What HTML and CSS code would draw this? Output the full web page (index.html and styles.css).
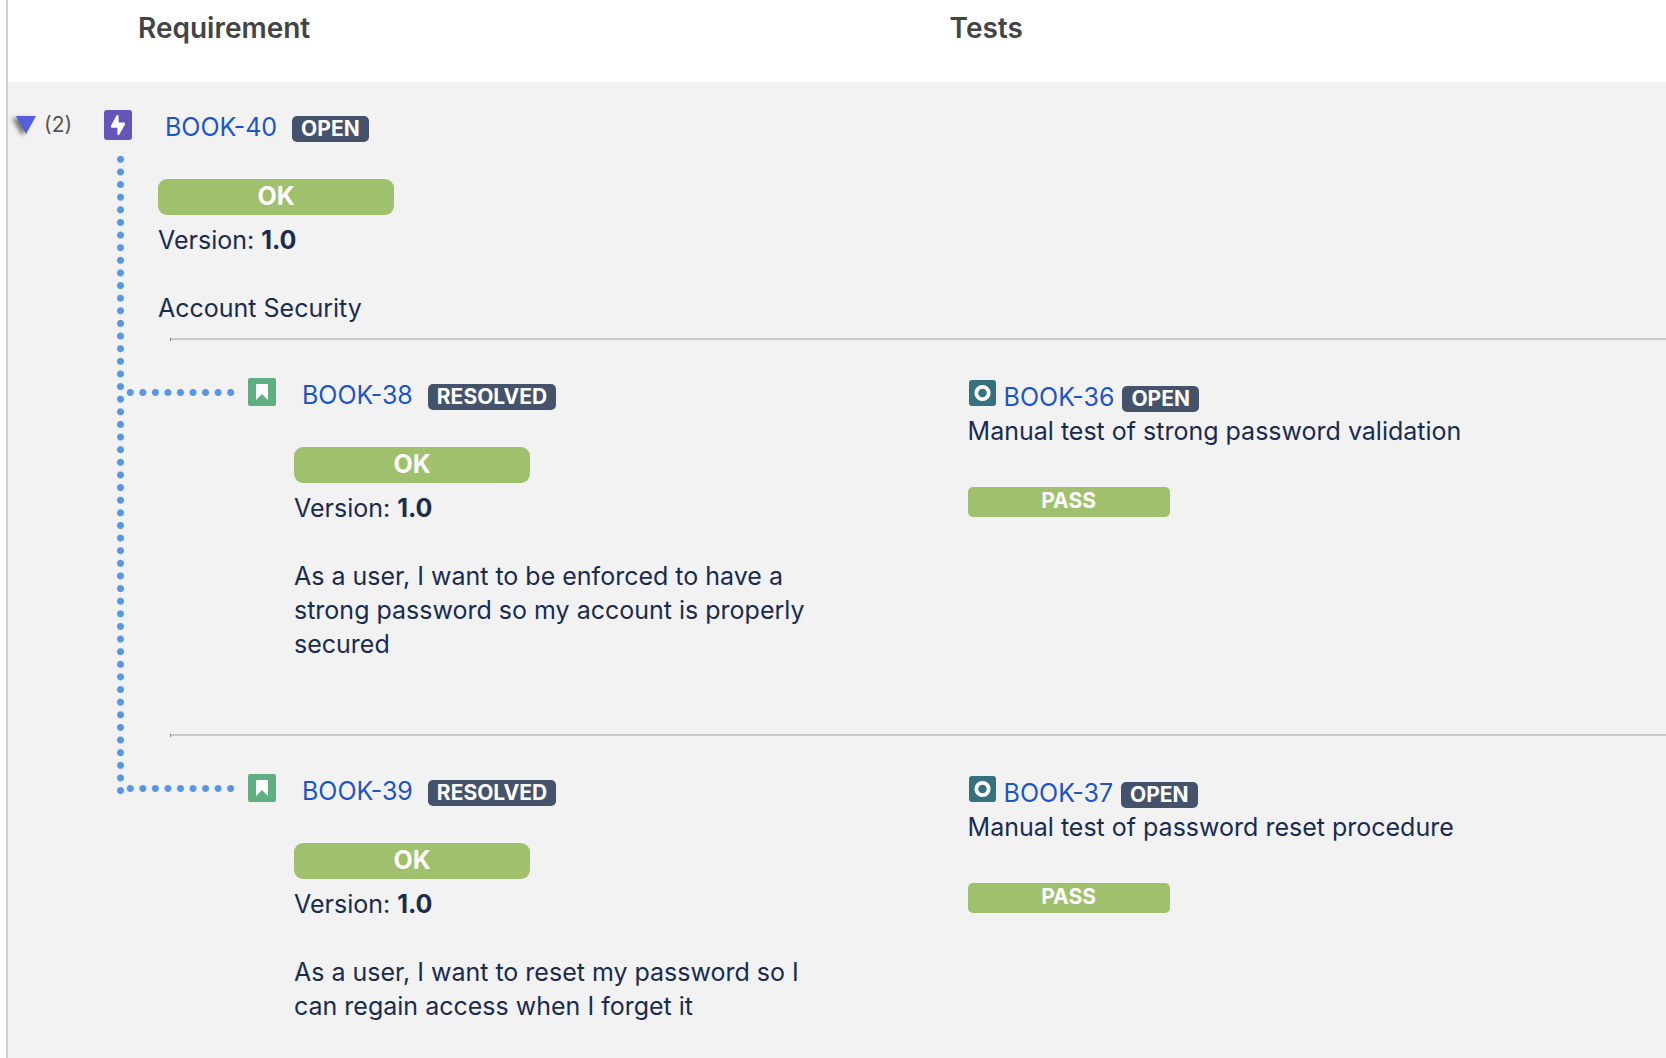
FILE: index.html
```html
<!DOCTYPE html>
<html lang="en">
  <head>
    <title>Traceability report</title>
    <meta charset="UTF-8">
    <meta name="viewport" content="width=device-width, initial-scale=1.0">
    <link rel="stylesheet" href="styles.css">
  </head>
  <body>
    <!--icons used in the rows-->
    <svg class="sprite" aria-hidden="true">
      <symbol id="epic" viewBox="0 0 28 30" preserveAspectRatio="none">
        <rect width="28" height="30" rx="3" fill="#6555b8"/>
        <path d="M12.4 5.6L7 15.8Q6.4 17.6 8 17.8H13.4V24.2Q13.8 26 15.2 24.8L21 14.6Q21.6 12.8 20 12.6H14.6V5.8Q13.8 4.2 12.4 5.6Z" fill="#fff"/>
      </symbol>
      <symbol id="story" viewBox="0 0 28 28">
        <rect width="28" height="28" rx="2" fill="#5faf82"/>
        <path d="M8 7Q8 6 9 6H19Q20 6 20 7V22L14 16L8 22Z" fill="#fff"/>
      </symbol>
      <symbol id="test" viewBox="0 0 27 26">
        <rect width="27" height="26" rx="3" fill="#36717f"/>
        <circle cx="13.5" cy="13" r="6.2" fill="none" stroke="#fff" stroke-width="3.8"/>
      </symbol>
    </svg>

    <div class="report">
      <table>
        <colgroup>
          <col class="col-toggle">
          <col class="col-req">
          <col>
        </colgroup>
        <thead>
          <tr>
            <td></td>
            <th class="req-head" scope="col">Requirement</th>
            <th scope="col">Tests</th>
          </tr>
        </thead>
        <tbody>
          <tr>
            <td class="tree" rowspan="4">
              <div class="toggle">
                <button type="button" aria-label="Collapse">
                  <svg width="20" height="18" viewBox="0 0 20 18"><path d="M0 0H20L10 18Z" fill="#555fdc"/></svg>
                </button>
                <span>(2)</span>
              </div>
              <div class="trunk"></div>
            </td>
            <td class="req epic">
              <div class="title">
                <svg class="icon icon-epic"><use href="#epic"/></svg>
                <a href="#">BOOK-40</a>
                <span class="badge">OPEN</span>
              </div>
              <div class="status">OK</div>
              <p>Version: <b>1.0</b></p>
              <p class="summary">Account Security</p>
            </td>
            <td></td>
          </tr>

          <tr><td colspan="2"><hr></td></tr>

          <tr>
            <td class="req child">
              <div class="title">
                <div class="branch"></div>
                <svg class="icon"><use href="#story"/></svg>
                <a href="#">BOOK-38</a>
                <span class="badge">RESOLVED</span>
              </div>
              <div class="status">OK</div>
              <p>Version: <b>1.0</b></p>
              <p class="summary">As a user, I want to be enforced to have a strong password so my account is properly secured</p>
            </td>
            <td class="test">
              <div class="title">
                <svg class="icon"><use href="#test"/></svg>
                <a href="#">BOOK-36</a>
                <span class="badge">OPEN</span>
              </div>
              <p>Manual test of strong password validation</p>
              <div class="result">PASS</div>
            </td>
          </tr>

          <tr><td colspan="2"><hr></td></tr>

          <tr>
            <td></td>
            <td class="req child">
              <div class="title">
                <div class="branch"></div>
                <svg class="icon"><use href="#story"/></svg>
                <a href="#">BOOK-39</a>
                <span class="badge">RESOLVED</span>
              </div>
              <div class="status">OK</div>
              <p>Version: <b>1.0</b></p>
              <p class="summary">As a user, I want to reset my password so I can regain access when I forget it</p>
            </td>
            <td class="test">
              <div class="title">
                <svg class="icon"><use href="#test"/></svg>
                <a href="#">BOOK-37</a>
                <span class="badge">OPEN</span>
              </div>
              <p>Manual test of password reset procedure</p>
              <div class="result">PASS</div>
            </td>
          </tr>
        </tbody>
      </table>
    </div>
  </body>
</html>
```

FILE: styles.css
```css
* {
  box-sizing: border-box;
}
body {
  font-family: Inter, "Liberation Sans", Arial, sans-serif;
  font-size: 25px;
  line-height: 34px;
  color: #1a2b50;
  background: white;
  margin: 0;
}
.sprite {
  display: none;
}
.report {
  min-height: 100vh;
  margin-left: 6px;
  border-left: 2px solid #cfcfcf;
  background: #f2f2f2;
}
table {
  width: 100%;
  table-layout: fixed;
  border-collapse: collapse;
}
th, td {
  padding: 0;
  text-align: left;
  vertical-align: top;
}
p {
  margin: 0;
}
a {
  color: #1d55c9;
  text-decoration: none;
}
a:hover {
  text-decoration: underline;
}

/* Columns */
.col-toggle {
  width: 96px;
}
.col-req {
  width: 51%;
}
thead {
  background: white;
}
thead th {
  height: 82px;
  padding-top: 11px;
  font-size: 28px;
  font-weight: 600;
  color: #444;
}
.req-head {
  padding-left: 34px;
}

/* Toggle and the dotted tree lines */
.tree {
  position: relative;
}
.toggle {
  display: flex;
  align-items: center;
  gap: 8px;
  height: 30px;
  margin: 28px 0 0 8px;
  font-size: 21px;
  color: #555;
}
.toggle button {
  display: flex;
  padding: 0;
  border: 0;
  background: none;
  cursor: pointer;
}
.toggle svg {
  filter: drop-shadow(-4px 2px 2px #777);
  overflow: visible;
}
.trunk {
  position: absolute;
  left: 109px;
  top: 71px;
  bottom: -60px;
  width: 7px;
  background: radial-gradient(circle, #5596e6 3px, transparent 4px) center top / 7px calc(100% / 51);
}
.branch {
  width: 113px;
  height: 7px;
  margin-right: 11px;
  background: radial-gradient(circle, #5596e6 3px, transparent 4px) left center / calc(100% / 9) 7px;
}

/* Requirement cells */
.title {
  display: flex;
  align-items: center;
  height: 34px;
}
.icon {
  flex: none;
  align-self: flex-start;
  width: 28px;
  height: 28px;
}
.icon-epic {
  height: 30px;
}
.req a {
  margin: 0 15px 0 26px;
}
.req p, .status {
  margin-left: 54px;
}
.epic {
  padding: 28px 0 13px;
}
.epic a {
  margin-left: 33px;
}
.child {
  padding: 37px 0 73px;
}
.child .title {
  padding-left: 20px;
}
.child .branch {
  align-self: flex-start;
  margin-top: 11px;
}
.child p, .child .status {
  margin-left: 190px;
}
.badge {
  height: 26px;
  margin-top: 3px;
  padding: 0 9px;
  border-radius: 5px;
  background: #45526c;
  color: white;
  font-size: 21px;
  font-weight: 700;
  line-height: 26px;
}
.status, .result {
  border-radius: 9px;
  background: #9fc06d;
  color: white;
  font-weight: 700;
  text-align: center;
}
.status {
  width: 236px;
  height: 36px;
  margin-top: 35px;
  margin-bottom: 8px;
}
.req .summary {
  max-width: 530px;
  margin-top: 34px;
}
/* Row separator with a small tick at its start */
hr {
  height: 3px;
  margin: 0 0 0 66px;
  border: 0;
  border-left: 1px solid #888;
  background: linear-gradient(#cacaca, #cacaca) top / 100% 2px no-repeat;
}

/* Test cells */
.test {
  padding: 39px 0 0 18px;
}
.test .icon {
  width: 27px;
  height: 26px;
  margin-left: 1px;
}
.test a {
  margin: 0 8px;
}
.result {
  width: 202px;
  height: 30px;
  margin-top: 39px;
  border-radius: 5px;
  font-size: 21px;
  line-height: 28px;
}
```
